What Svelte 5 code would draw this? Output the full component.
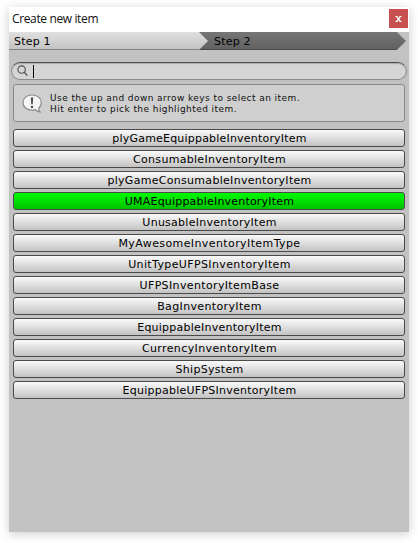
<script>
  // Each entry: label and its tracking in pixels.
  const items = [
    ['plyGameEquippableInventoryItem', 0.2],
    ['ConsumableInventoryItem', 0.3],
    ['plyGameConsumableInventoryItem', 0.3],
    ['UMAEquippableInventoryItem', 0.2],
    ['UnusableInventoryItem', 0.26],
    ['MyAwesomeInventoryItemType', 0.4],
    ['UnitTypeUFPSInventoryItem', 0.38],
    ['UFPSInventoryItemBase', 0.36],
    ['BagInventoryItem', 0.36],
    ['EquippableInventoryItem', 0.24],
    ['CurrencyInventoryItem', 0.38],
    ['ShipSystem', 0.3],
    ['EquippableUFPSInventoryItem', 0.25]
  ];
  let selected = $state(3);
</script>

<div class="desktop">
  <div class="window">
    <header>
      <span class="title">Create new item</span>
      <button class="close" aria-label="Close">
        <svg width="7" height="6" viewBox="0 0 7 6"><path d="M0.500 .5h2M4.500 .5h2M.5 5.500h2M4.500 5.500h2" stroke="#fff" /><path d="M1.700 .7l3.600 4.600M5.300 .7l-3.600 4.600" stroke="#fff" stroke-width="1.300" /></svg>
      </button>
    </header>

    <nav>
      <svg width="400" height="18" viewBox="0 0 400 18">
        <defs>
          <linearGradient id="light" x2="0" y2="1"><stop stop-color="#e0e0e0" /><stop offset="1" stop-color="#c2c2c2" /></linearGradient>
          <linearGradient id="dark" x2="0" y2="1"><stop stop-color="#767676" /><stop offset="1" stop-color="#606060" /></linearGradient>
        </defs>
        <path d="M180 0H387.500L396.500 9L387.500 18H180z" fill="url(#dark)" />
        <path d="M180 17.500H388" stroke="#4b4b4b" />
        <path d="M387.500 0L396.500 9L387.500 18" fill="none" stroke="#666" stroke-width=".7" />
        <path d="M0 0H190L199 9L190 18H0z" fill="url(#light)" />
        <path d="M0 17.500H190" stroke="#828282" />
      </svg>
      <span class="step one">Step 1</span>
      <span class="step two">Step 2</span>
    </nav>

    <div class="search">
      <svg width="12" height="12" viewBox="0 0 12 12" fill="none" stroke="#505050"><circle cx="4.600" cy="4.600" r="3.700" stroke-width="1.100" /><path d="M7.300 7.300L10.300 10.600" stroke-width="1.400" /></svg>
      <i class="caret"></i>
    </div>

    <div class="help">
      <svg width="21" height="19" viewBox="0 0 21 19">
        <path d="M10 1C4.800 1 1 4.200 1 8.600c0 4.400 3.800 7.600 9 7.600 1.200 0 2.300-.2 3.300-.5 1.200 1.100 2.700 1.900 4.600 2.200-.8-1.100-1.200-2.400-1.100-3.800 1.600-1.400 2.500-3.200 2.500-5.500C19.300 4.200 15.200 1 10 1z" fill="#f5f5f5" stroke="#898989" stroke-width="1.200" />
        <path d="M8.800 3.500h2.400l-.5 6.800H9.300z" fill="#484848" /><circle cx="10" cy="12.900" r="1.200" fill="#484848" />
      </svg>
      <p>Use the up and down arrow keys to select an item.<br />Hit enter to pick the highlighted item.</p>
    </div>

    <div class="list">
      {#each items as [label, tracking], i}
        <button class="item" class:selected={i === selected} style:letter-spacing="{tracking}px" onclick={() => (selected = i)}>{label}</button>
      {/each}
    </div>
  </div>
</div>

<style>
  .desktop { box-sizing: border-box; width: 418px; height: 543px; padding: 7px 9px 11px; background: #fff; overflow: hidden; font-family: 'DejaVu Sans', sans-serif; font-size: 11px; color: #000; }
  .window { width: 400px; height: 525px; background: #c2c2c2; box-shadow: 0 2px 10px rgba(0, 0, 0, .2); }
  button { border: 0; margin: 0; padding: 0; font: inherit; color: inherit; }
  header { height: 25px; box-sizing: border-box; background: #fff; display: flex; justify-content: space-between; padding: 2px 1px 0 3px; }
  .title { font: 12px/20px 'Open Sans', sans-serif; letter-spacing: -.37px; color: #111; }
  .close { width: 19px; height: 19px; background: #c75050; display: flex; align-items: center; justify-content: center; }
  nav { display: grid; height: 18px; grid-template-columns: 205px 195px; }
  nav svg { grid-area: 1 / 1 / 2 / 3; display: block; }
  .step { grid-row: 1; height: 18px; line-height: 20px; letter-spacing: .2px; z-index: 1; }
  .one { grid-column: 1; padding-left: 5px; }
  .two { grid-column: 2; }
  .search { box-sizing: border-box; height: 18px; margin: 12px 2px 0; border: 1px solid #8b8b8b; border-top-color: #4e4e4e; border-radius: 9px; background: #d5d5d5; box-shadow: inset 0 1px 1px #aaa; display: flex; align-items: center; padding-left: 5px; }
  .caret { width: 1px; height: 13px; background: #000; margin-left: 4px; }
  .help { box-sizing: border-box; height: 38px; margin: 4px 4px 7px; border: 1px solid #898989; border-radius: 3px; background: #cfcfcf; display: flex; align-items: center; padding-left: 8px; }
  .help p { margin: 1px 0 0 7px; font-size: 9px; line-height: 11px; letter-spacing: .43px; color: #111; white-space: nowrap; }
  .list { display: flex; flex-direction: column; gap: 3px; padding: 0 4px; }
  .item { box-sizing: border-box; height: 18px; border: 1px solid #4a4a4a; border-radius: 3px; background: linear-gradient(#fafafa, #c3c3c3); padding: 1px 0 0 1px; line-height: 16px; text-align: center; white-space: nowrap; }
  .selected { background: linear-gradient(#00fb00, #00c300); }
</style>
